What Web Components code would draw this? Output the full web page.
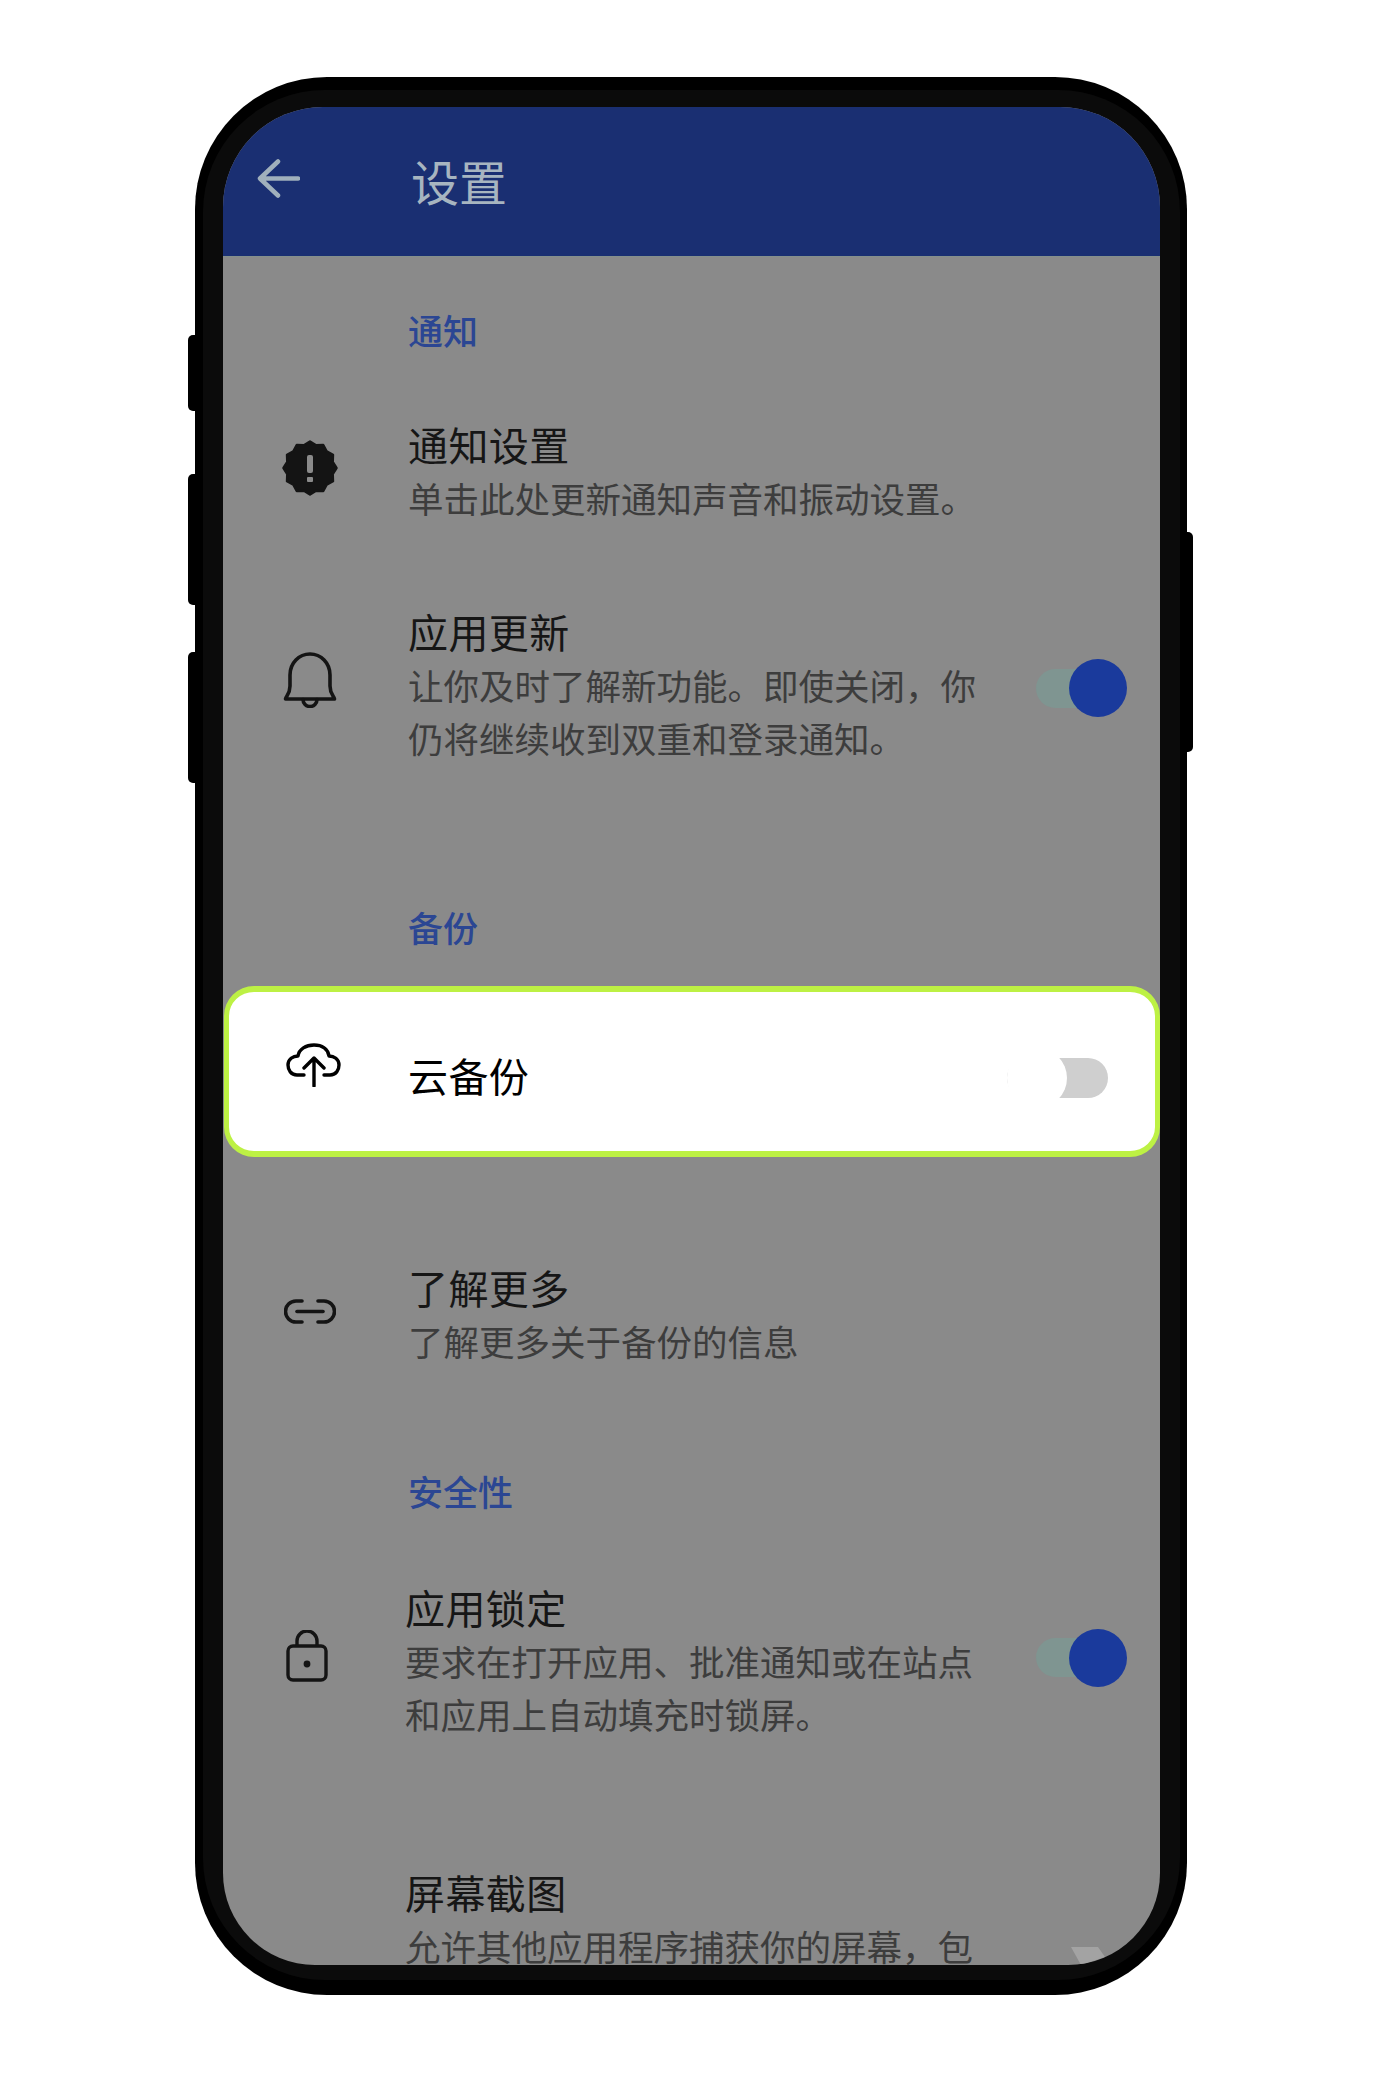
<!DOCTYPE html>
<html lang="zh-CN">
<head>
<meta charset="utf-8">
<title>设置</title>
<style>
html,body{margin:0;padding:0;background:#fff}
body{display:flex;justify-content:center;align-items:flex-start;padding-top:77px;height:1996px;overflow:hidden;font-family:"Noto Sans CJK SC","Noto Sans",sans-serif}
</style>
</head>
<body>
<phone-frame>
  <app-bar>设置</app-bar>
  <section-label style="margin-top:45.5px">通知</section-label>
  <setting-row style="margin-top:62px">
    <row-icon slot="icon" name="badge" style="--dy:-3px"></row-icon>
    <span slot="title">通知设置</span>
    单击此处更新通知声音和振动设置。
  </setting-row>
  <setting-row style="margin-top:81.5px">
    <row-icon slot="icon" name="bell" style="--dy:-4.5px"></row-icon>
    <span slot="title">应用更新</span>
    让你及时了解新功能。即使关闭，你仍将继续收到双重和登录通知。
    <toggle-switch slot="end" on style="--dy:3.5px"></toggle-switch>
  </setting-row>
  <section-label style="margin-top:136px">备份</section-label>
  <setting-row highlight style="margin-top:32.5px">
    <row-icon slot="icon" name="cloud" style="--dy:-6px"></row-icon>
    <span slot="title">云备份</span>
    <toggle-switch slot="end" style="--dy:6.5px"></toggle-switch>
  </setting-row>
  <setting-row style="margin-top:104.5px">
    <row-icon slot="icon" name="link" style="--dy:-3px"></row-icon>
    <span slot="title">了解更多</span>
    了解更多关于备份的信息
  </setting-row>
  <section-label style="margin-top:97px">安全性</section-label>
  <setting-row shifted style="margin-top:64px">
    <row-icon slot="icon" name="lock" style="--dy:-5px"></row-icon>
    <span slot="title">应用锁定</span>
    要求在打开应用、批准通知或在站点和应用上自动填充时锁屏。
    <toggle-switch slot="end" on style="--dy:-3px"></toggle-switch>
  </setting-row>
  <setting-row shifted style="margin-top:126px">
    <span slot="title">屏幕截图</span>
    允许其他应用程序捕获你的屏幕，包
  </setting-row>
</phone-frame>
<script>
function shell(el, html){ el.attachShadow({mode:'open'}).innerHTML = html; }

class PhoneFrame extends HTMLElement{
  connectedCallback(){
    if(this.shadowRoot) return;
    shell(this, `<style>
      :host{display:block;position:relative;box-sizing:border-box;width:992px;height:1918px;padding:13px 7px 15px 8px;background:#000;border-radius:132px}
      .btn{position:absolute;background:#000;width:10px}
      .l{left:-7px;border-radius:5px 0 0 5px}
      .r{right:-6px;border-radius:0 5px 5px 0}
      .bezel{box-sizing:border-box;height:100%;padding:17px 20px 15px;background:#0b0b0b;border-radius:122px}
      .screen{position:relative;height:100%;overflow:hidden;background:#8a8a8a;border-radius:100px 100px 92px 92px;display:flex;flex-direction:column}
      svg{position:absolute;right:55px;bottom:0}
    </style>
    <div class="btn l" style="top:258px;height:76px"></div>
    <div class="btn l" style="top:397px;height:131px"></div>
    <div class="btn l" style="top:575px;height:131px"></div>
    <div class="btn r" style="top:455px;height:220px"></div>
    <div class="bezel"><div class="screen"><slot></slot>
      <svg width="34" height="18" viewBox="0 0 34 18"><polygon points="0,0 27,0 34,10 10,18" fill="#a3a3a3"/></svg>
    </div></div>`);
  }
}
class AppBar extends HTMLElement{
  connectedCallback(){
    if(this.shadowRoot) return;
    shell(this, `<style>
      :host{display:flex;flex:none;align-items:center;box-sizing:border-box;height:150px;padding:0 0 4px 34px;background:#1a2f72;border-bottom:1px solid #84908c;color:#a7b5c0;font-size:48px;line-height:60px}
      svg{flex:none;margin-right:111px;margin-top:-2px}
    </style>
    <svg width="43" height="39" viewBox="0 0 43 39" fill="none" stroke="#a0b0bc" stroke-width="4.5" stroke-linecap="round" stroke-linejoin="round"><path d="M21 2.5 L3 19.5 L21 36.5 M4 19.5 H41"/></svg>
    <span><slot></slot></span>`);
  }
}
class SectionLabel extends HTMLElement{
  connectedCallback(){
    if(this.shadowRoot) return;
    shell(this, `<style>
      :host{display:block;flex:none;padding-left:185px;color:#2b4693;font-size:35px;font-weight:500;line-height:53px}
    </style><slot></slot>`);
  }
}
class SettingRow extends HTMLElement{
  connectedCallback(){
    if(this.shadowRoot) return;
    shell(this, `<style>
      :host{display:grid;flex:none;grid-template-columns:174px 1fr auto;column-gap:11px;align-items:center}
      :host([shifted]){grid-template-columns:168px 1fr auto;column-gap:14px}
      :host([highlight]){box-sizing:border-box;height:171px;margin-left:1px;grid-template-columns:168px 1fr auto;border:solid #bdf144;border-width:6px 5px;border-radius:30px;background:#fff;color:#000}
      .ic{display:flex;justify-content:center;align-items:center}
      .t{font-size:40px;line-height:53px;color:#161616;letter-spacing:.4px;white-space:nowrap}
      :host([highlight]) .t{color:#000;padding-top:9px}
      .s{font-size:35.5px;line-height:53px;color:#3d3d3d;width:572px}
    </style>
    <div class="ic"><slot name="icon"></slot></div>
    <div><div class="t"><slot name="title"></slot></div><div class="s"><slot></slot></div></div>
    <slot name="end"></slot>`);
  }
}
class ToggleSwitch extends HTMLElement{
  connectedCallback(){
    if(this.shadowRoot) return;
    shell(this, `<style>
      :host{display:grid;align-items:center;margin-top:calc(var(--dy,0px)*2)}
      :host([on]){width:91px;height:58px;margin-right:33px}
      :host(:not([on])){width:101px;height:60px;margin-right:47px}
      .track,.knob{grid-area:1/1;border-radius:50%}
      .track{height:39px;border-radius:20px}
      .knob{width:60px;height:60px;background:#fff}
      :host([on]) .track{width:70px;background:#7f9591}
      :host([on]) .knob{width:58px;height:58px;background:#1a3a9c;justify-self:end}
      :host(:not([on])) .track{height:40px;background:#cfcfcf}
    </style><div class="track"></div><div class="knob"></div>`);
  }
}
function badgePoints(){
  const p=[];
  for(let i=0;i<24;i++){
    const r=i%2?23.5:26.5, a=i*Math.PI/12;
    p.push((28+r*Math.sin(a)).toFixed(2)+','+(28-r*Math.cos(a)).toFixed(2));
  }
  return p.join(' ');
}
const ICONS={
  badge:`<svg width="56" height="56" viewBox="0 0 56 56"><polygon points="${badgePoints()}" fill="#141414" stroke="#141414" stroke-width="2.5" stroke-linejoin="round"/><rect x="25" y="15" width="6" height="18" rx="2" fill="#8a8a8a"/><rect x="25" y="37" width="6" height="5" rx="1" fill="#8a8a8a"/></svg>`,
  bell:`<svg width="54" height="56" viewBox="0 0 54 56" fill="none" stroke="#141414" stroke-width="3.6" stroke-linejoin="round" stroke-linecap="round"><path d="M2.5 47 C3 44 7 42 7 34 V23 C7 11 16 2 27 2 C38 2 47 11 47 23 V34 C47 42 51 44 51.5 47 Z"/><path d="M20 47.5 A7 7 0 0 0 34 47.5"/></svg>`,
  cloud:`<svg width="55" height="44" viewBox="0 0 55 44" fill="none" stroke="#000" stroke-width="3.4" stroke-linejoin="round" stroke-linecap="round"><path d="M18 32 H11 C5 32 2 27 2 22 C2 16 7 13 12 13 C13 6 20 2 28 2 C36 2 42 6 43 13 C48 13 53 16 53 22 C53 27 50 32 44 32 H38"/><path d="M28 43 V15 M18 25 L28 15 L38 25"/></svg>`,
  link:`<svg width="52" height="25" viewBox="0 0 52 25" fill="none" stroke="#141414" stroke-width="3.6" stroke-linecap="round"><path d="M18 2 H12 A10.5 10.5 0 0 0 12 23 H18"/><path d="M34 2 H40 A10.5 10.5 0 0 1 40 23 H34"/><path d="M13 12.5 H39"/></svg>`,
  lock:`<svg width="42" height="52" viewBox="0 0 42 52" fill="none" stroke="#141414" stroke-width="3.4"><rect x="2" y="16" width="38" height="34" rx="5"/><path d="M11 16 V11 A10 10 0 0 1 31 11 V16"/><circle cx="21" cy="34" r="3.4" fill="#141414" stroke="none"/></svg>`
};
class RowIcon extends HTMLElement{
  connectedCallback(){
    if(this.shadowRoot) return;
    shell(this, `<style>
      :host{display:flex;margin-top:calc(var(--dy,0px)*2)}
      svg{display:block}
    </style>${ICONS[this.getAttribute('name')]||''}`);
  }
}
customElements.define('phone-frame',PhoneFrame);
customElements.define('app-bar',AppBar);
customElements.define('section-label',SectionLabel);
customElements.define('setting-row',SettingRow);
customElements.define('toggle-switch',ToggleSwitch);
customElements.define('row-icon',RowIcon);
</script>
</body>
</html>
